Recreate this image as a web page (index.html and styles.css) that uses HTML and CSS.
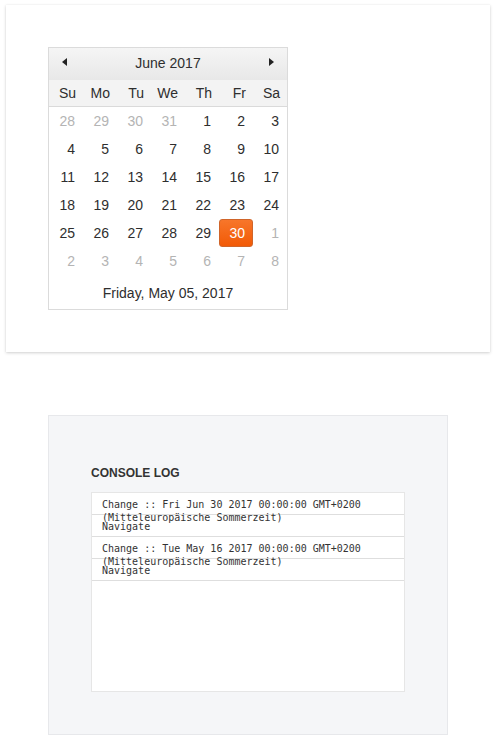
FILE: index.html
```html
<!DOCTYPE html>
<html>
<head>
<meta charset="utf-8">
<link rel="stylesheet" href="styles.css">
</head>
<body>
<div class="card">
  <div class="calendar">
    <div class="cal-header">
      <span class="nav prev"></span>
      <span class="title">June 2017</span>
      <span class="nav next"></span>
    </div>
    <div class="grid names">
      <div>Su</div><div>Mo</div><div>Tu</div><div>We</div><div>Th</div><div>Fr</div><div>Sa</div>
    </div>
    <div class="grid days">
      <div class="other">28</div><div class="other">29</div><div class="other">30</div><div class="other">31</div><div>1</div><div>2</div><div>3</div>
      <div>4</div><div>5</div><div>6</div><div>7</div><div>8</div><div>9</div><div>10</div>
      <div>11</div><div>12</div><div>13</div><div>14</div><div>15</div><div>16</div><div>17</div>
      <div>18</div><div>19</div><div>20</div><div>21</div><div>22</div><div>23</div><div>24</div>
      <div>25</div><div>26</div><div>27</div><div>28</div><div>29</div><div class="selected">30</div><div class="other">1</div>
      <div class="other">2</div><div class="other">3</div><div class="other">4</div><div class="other">5</div><div class="other">6</div><div class="other">7</div><div class="other">8</div>
    </div>
    <div class="cal-footer">Friday, May 05, 2017</div>
  </div>
</div>

<div class="console-box">
  <h4 class="console-title">CONSOLE LOG</h4>
  <ul class="console">
    <li>Change :: Fri Jun 30 2017 00:00:00 GMT+0200 (Mitteleuropäische Sommerzeit)</li>
    <li>Navigate</li>
    <li>Change :: Tue May 16 2017 00:00:00 GMT+0200 (Mitteleuropäische Sommerzeit)</li>
    <li>Navigate</li>
  </ul>
</div>
</body>
</html>
```
FILE: styles.css
```css
html, body {
  margin: 0;
  background: #fff;
}
body {
  padding: 5px 4px 0 6px;
  font-family: "Liberation Sans", Arial, sans-serif;
  color: #2e2e2e;
}
.card {
  width: 484px;
  box-sizing: border-box;
  padding: 42px;
  background: #fff;
  box-shadow: 0 1px 3px rgba(0,0,0,0.18), 0 0 1px rgba(0,0,0,0.08);
}
.calendar {
  width: 240px;
  box-sizing: border-box;
  border: 1px solid #dbdbdb;
  font-size: 14px;
}
.cal-header {
  height: 32px;
  display: flex;
  align-items: center;
  justify-content: space-between;
  padding: 0 13px;
  background: linear-gradient(#f5f5f5, #e8e8e8);
}
.cal-header .title {
  line-height: 28px;
  padding-bottom: 3px;
  color: #2e2e2e;
}
.nav {
  width: 0;
  height: 0;
  border-top: 4px solid transparent;
  border-bottom: 4px solid transparent;
  margin-bottom: 4px;
}
.nav.prev { border-right: 5px solid #222; }
.nav.next { border-left: 5px solid #222; }
.grid {
  display: grid;
  grid-template-columns: repeat(7, 34px);
}
.names {
  background: #f3f3f3;
  border-bottom: 1px solid #dadada;
}
.names div {
  height: 26px;
  line-height: 26px;
  text-align: right;
  padding-right: 7px;
}
.days div {
  height: 28px;
  line-height: 28px;
  text-align: right;
  padding-right: 8px;
  box-sizing: border-box;
}
.days .other {
  color: #b4b4b4;
}
.days .selected {
  color: #fff;
  background: linear-gradient(#f7762a, #f25a06);
  border: 1px solid #d0652a;
  border-radius: 3px;
  line-height: 26px;
  padding-right: 7px;
}
.cal-footer {
  height: 34px;
  box-sizing: border-box;
  padding-top: 3px;
  line-height: 31px;
  text-align: center;
  color: #2e2e2e;
}
.console-box {
  margin: 63px 0 0 42px;
  width: 400px;
  height: 320px;
  box-sizing: border-box;
  background: #f5f6f8;
  border: 1px solid #e7e8eb;
  padding: 49px 42px 0 42px;
}
.console-title {
  margin: 0 0 11px 0;
  font-size: 12px;
  line-height: 16px;
  font-weight: bold;
  color: #333;
}
.console {
  list-style: none;
  margin: 0;
  padding: 0;
  height: 200px;
  box-sizing: border-box;
  background: #fff;
  border: 1px solid #e6e6e6;
}
.console li {
  height: 22px;
  box-sizing: border-box;
  padding: 5px 10px 0 10px;
  border-bottom: 1px solid #dedede;
  font-family: "DejaVu Sans Mono", "Liberation Mono", monospace;
  font-size: 10px;
  line-height: 13px;
  color: #333;
  white-space: normal;
  overflow: visible;
}
```
